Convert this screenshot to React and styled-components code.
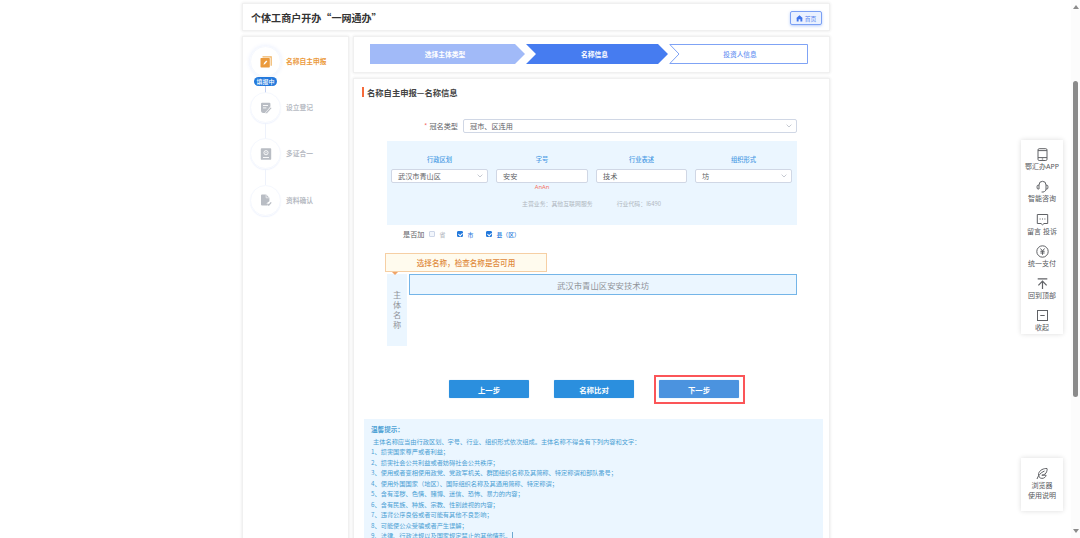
import React, { useState } from "react";
import styled, { createGlobalStyle } from "styled-components";

const sideSteps = [
  { id: 1, name: "名称自主申报", icon: "edit", status: "填报中" },
  { id: 2, name: "设立登记", icon: "note" },
  { id: 3, name: "多证合一", icon: "cert" },
  { id: 4, name: "资料确认", icon: "file" },
];

const tips = [
  "损害国家尊严或者利益；",
  "损害社会公共利益或者妨碍社会公共秩序；",
  "使用或者变相使用政党、党政军机关、群团组织名称及其简称、特定称谓和部队番号；",
  "使用外国国家（地区）、国际组织名称及其通用简称、特定称谓；",
  "含有淫秽、色情、赌博、迷信、恐怖、暴力的内容；",
  "含有民族、种族、宗教、性别歧视的内容；",
  "违背公序良俗或者可能有其他不良影响；",
  "可能使公众受骗或者产生误解；",
  "法律、行政法规以及国家规定禁止的其他情形。",
];

const tools = [
  { name: "鄂汇办APP", icon: "phone" },
  { name: "智能咨询", icon: "headset" },
  { name: "留言 投诉", icon: "message" },
  { name: "统一支付", icon: "yen" },
  { name: "回到顶部", icon: "top" },
  { name: "收起", icon: "minus" },
];

const SideIcon = ({ type }) => {
  if (type === "edit") {
    return (
      <svg width="12" height="12" viewBox="0 0 12 12">
        <path d="M2.5 .9h8.7v8.9" fill="none" stroke="#f0b465" strokeWidth="1.2" />
        <rect x=".5" y="2" width="9.3" height="9.5" rx=".8" fill="#eb9a3c" />
        <path d="M3.6 8.7l.4-1.6 2.3-2.6 1 .9L5 8z" fill="#fff" />
      </svg>
    );
  }
  if (type === "note") {
    return (
      <svg width="12" height="12" viewBox="0 0 12 12">
        <path d="M2 .8h7.4a1 1 0 0 1 1 1v2.800L5.200 10.900H3.200C1.800 10.900 1 10 1 8.800V1.800a1 1 0 0 1 1-1z" fill="#b9bdc4" />
        <path d="M3 3.500h5M3 5.900h3.400" stroke="#fff" strokeWidth=".9" />
        <path d="M10.600 5.200l1.100 1-4.500 5.100-1.800.4.5-1.700z" fill="#b9bdc4" stroke="#fff" strokeWidth=".5" />
      </svg>
    );
  }
  if (type === "cert") {
    return (
      <svg width="12" height="12" viewBox="0 0 12 12">
        <rect x=".8" y=".2" width="10.400" height="11.600" rx=".9" fill="#b9bdc4" />
        <circle cx="6" cy="4.700" r="2.100" fill="none" stroke="#fff" strokeWidth=".9" />
        <circle cx="6" cy="4.700" r=".6" fill="#fff" />
        <path d="M3 9.500h6" stroke="#fff" strokeWidth=".9" />
      </svg>
    );
  }
  return (
    <svg width="12" height="12" viewBox="0 0 12 12">
      <path d="M2 .5h4.200l3.200 3.200v3.600L6.600 9.200l1.200 2.200H2a1 1 0 0 1-1-1V1.500a1 1 0 0 1 1-1z" fill="#b9bdc4" />
      <path d="M6.100 .5v3.300h3.200" fill="none" stroke="#fff" strokeWidth=".6" />
      <path d="M7.400 9.700l1.400 1.400 2.400-2.700" fill="none" stroke="#b9bdc4" strokeWidth="1.300" />
    </svg>
  );
};

const ToolIcon = ({ type }) => (
  <ToolSvg viewBox="0 0 13 13">
    {type === "phone" && (
      <>
        <rect x="2" y=".7" width="9" height="11.800" rx="1.200" />
        <path d="M2 9.600h9M2 2.600h9M5.800 11h1.400" />
      </>
    )}
    {type === "headset" && (
      <>
        <path d="M3 9V5a3.500 3.700 0 0 1 7 0v4M3 5.200H2.200A1.100 1.100 0 0 0 1.100 6.300v1.600A1.100 1.100 0 0 0 2.200 9H3M10 5.200h.8a1.100 1.100 0 0 1 1.100 1.100v1.600A1.100 1.100 0 0 1 10.800 9H10" />
        <path d="M10 9c0 1.600-1 2.600-2.600 2.800M5.600 12h2" />
      </>
    )}
    {type === "message" && (
      <>
        <path d="M1.300 1.500h10.400v9H8l-1.500 1.300L5 10.500H1.300z" />
        <path d="M3.600 6h1M6 6h1M8.400 6h1" />
      </>
    )}
    {type === "yen" && (
      <>
        <circle cx="6.500" cy="6.500" r="5.700" />
        <path d="M4.500 3.500l2 2.600 2-2.600M6.500 6.100v3.700M4.400 6.300h4.200M4.400 8h4.200" />
      </>
    )}
    {type === "top" && (
      <path d="M1.700 1.800h9.600M6.500 12V4.400M2.400 8.300l4.100-4.200 4.100 4.200" strokeWidth="1.200" />
    )}
    {type === "minus" && (
      <>
        <rect x="1.500" y="1.500" width="10" height="10" />
        <path d="M4.300 6.500h4.400" />
      </>
    )}
    {type === "browser" && (
      <>
        <path d="M11 1.500C8 1.200 3.500 3 2.600 6.600c-.6 2.700 1 4.700 3.300 4.800 2.400 0 4-1.600 4.200-3.200H5.800c2.500-.4 4.300-1.500 4.800-3.400.4-1.300.8-2.300.4-3.300z" />
        <path d="M1 12c1-3 3.500-6.500 7.500-8" />
      </>
    )}
  </ToolSvg>
);

const Arrow = () => (
  <svg width="6" height="4" viewBox="0 0 6 4">
    <path d="M.6 .6L3 3 5.400 .6" fill="none" stroke="#b8bdc7" strokeWidth=".8" />
  </svg>
);

const App = () => {
  const [checked, setChecked] = useState({ city: true, county: true });

  const toggle = (key) => {
    setChecked((current) => ({ ...current, [key]: !current[key] }));
  };

  return (
    <Wrap>
      <GlobalStyle />
      <Container>
        <Header>
          <HeaderTitle>个体工商户开办“一网通办”</HeaderTitle>
          <HomeBtn>
            <svg width="7" height="7" viewBox="0 0 7 7">
              <path d="M3.500 .2L6.900 3.300H6.300V6.600H4.400V4.300H2.600v2.300H.700V3.300H.1z" fill="#3f74ec" />
            </svg>
            首页
          </HomeBtn>
        </Header>
        <Body>
          <Sidebar>
            {sideSteps.map((v) => (
              <SideItem key={v.id}>
                <Circle $active={!!v.status}>
                  <SideIcon type={v.icon} />
                  {v.status && <Status>{v.status}</Status>}
                </Circle>
                <SideName $active={!!v.status}>{v.name}</SideName>
              </SideItem>
            ))}
          </Sidebar>
          <Main>
            <StepBox>
              <Step $width="155px" $color="#a1baf8" $first>
                选择主体类型
              </Step>
              <Step $width="142px" $color="#467cf0">
                名称信息
              </Step>
              <LastStep>
                <StepOutline viewBox="0 0 139 20">
                  <path d="M.8 .5H138.500V19.500H.8L10 10z" fill="none" stroke="#7fa3f5" />
                </StepOutline>
                投资人信息
              </LastStep>
            </StepBox>
            <Panel>
              <PanelTitle>名称自主申报—名称信息</PanelTitle>
              <TypeRow>
                <TypeLabel>
                  <Required>*</Required>冠名类型
                </TypeLabel>
                <Field $width="334px">
                  冠市、区连用
                  <Arrow />
                </Field>
              </TypeRow>
              <NameBox>
                <Column $width="97px">
                  <ColumnTitle>行政区划</ColumnTitle>
                  <Field>
                    武汉市青山区
                    <Arrow />
                  </Field>
                </Column>
                <Column $width="92px">
                  <ColumnTitle>字号</ColumnTitle>
                  <Field>安安</Field>
                  <Pinyin>AnAn</Pinyin>
                </Column>
                <Column $width="91px">
                  <ColumnTitle>行业表述</ColumnTitle>
                  <Field>技术</Field>
                </Column>
                <Column $width="97px">
                  <ColumnTitle>组织形式</ColumnTitle>
                  <Field>
                    坊
                    <Arrow />
                  </Field>
                </Column>
                <Business>
                  <span>主营业务：其他互联网服务</span>
                  <span>行业代码：I6490</span>
                </Business>
              </NameBox>
              <CheckRow>
                是否加
                <Check $width="28px" $disabled>
                  <Box />省
                </Check>
                <Check $width="29px" onClick={() => toggle("city")}>
                  <Box $on={checked.city} />市
                </Check>
                <Check $width="40px" onClick={() => toggle("county")}>
                  <Box $on={checked.county} />县（区）
                </Check>
              </CheckRow>
              <Notice>选择名称，检查名称是否可用</Notice>
              <ResultBox>
                <ResultLabel>
                  <span>主</span>
                  <span>体</span>
                  <span>名</span>
                  <span>称</span>
                </ResultLabel>
                <Result>武汉市青山区安安技术坊</Result>
              </ResultBox>
              <BtnBox>
                <Btn>上一步</Btn>
                <Btn>名称比对</Btn>
                <NextFrame>
                  <Btn $light>下一步</Btn>
                </NextFrame>
              </BtnBox>
              <TipBox>
                <TipTitle>温馨提示：</TipTitle>
                <TipIntro>
                  主体名称应当由行政区划、字号、行业、组织形式依次组成。主体名称不得含有下列内容和文字：
                </TipIntro>
                {tips.map((v, i) => (
                  <Tip key={v}>
                    {i + 1}、{v}
                    {i === tips.length - 1 && <Caret />}
                  </Tip>
                ))}
              </TipBox>
            </Panel>
          </Main>
        </Body>
      </Container>
      <ToolBar>
        <ToolCard>
          {tools.map((v) => (
            <Tool key={v.name}>
              <ToolIcon type={v.icon} />
              <ToolName>{v.name}</ToolName>
            </Tool>
          ))}
        </ToolCard>
        <HelpCard>
          <ToolIcon type="browser" />
          <ToolName>浏览器</ToolName>
          <ToolName>使用说明</ToolName>
        </HelpCard>
      </ToolBar>
      <ScrollBar>
        <ScrollArrow $up />
        <ScrollThumb />
        <ScrollArrow />
      </ScrollBar>
    </Wrap>
  );
};

const GlobalStyle = createGlobalStyle`
  * {
    box-sizing: border-box;
  }
  body {
    margin: 0;
    background-color: #fff;
    font-family: "Noto Sans CJK SC", "Noto Sans", sans-serif;
    overflow: hidden;
  }
  svg {
    display: block;
    flex: none;
  }
`;

const Wrap = styled.div`
  width: 1080px;
  height: 538px;
  overflow: hidden;
  display: flex;
  padding-left: 242px;
  white-space: nowrap;
`;
const Container = styled.div`
  width: 588px;
  padding-top: 3px;
  flex: none;
`;
const Card = styled.div`
  background-color: #fff;
  border: 1px solid #f0f0f0;
  box-shadow: 0 0 3px rgba(0, 0, 0, 0.11);
`;

// Header
const Header = styled(Card)`
  height: 28px;
  padding: 0 7px 0 8px;
  display: flex;
  justify-content: space-between;
  align-items: center;
`;
const HeaderTitle = styled.div`
  font-size: 10.05px;
  font-weight: 700;
  color: #333;
`;
const HomeBtn = styled.button`
  width: 32px;
  height: 14px;
  margin-top: 2px;
  padding: 0;
  display: flex;
  justify-content: center;
  align-items: center;
  gap: 2px;
  font-family: inherit;
  font-size: 5.8px;
  color: #5b87ee;
  background-color: #eaf1ff;
  border: 1px solid #7ba0f4;
  border-radius: 2px;
  box-shadow: 0 1px 3px rgba(70, 124, 240, 0.4);
`;
const Body = styled.div`
  display: flex;
  justify-content: space-between;
  margin-top: 5px;
`;

// Sidebar
const Sidebar = styled(Card)`
  width: 107px;
  height: 510px;
  padding: 9px 0 0 7px;
`;
const SideItem = styled.div`
  height: 46.2px;
  display: flex;
  align-items: flex-start;
  gap: 5px;
`;
const Circle = styled.div`
  position: relative;
  width: 31px;
  height: 31px;
  display: flex;
  justify-content: center;
  align-items: center;
  border-radius: 50%;
  border: 1px solid #f5f8fe;
  box-shadow: ${(props) =>
    props.$active ? "0 0 4px rgba(90, 130, 240, 0.16)" : "0 1px 1px rgba(90, 130, 240, 0.1)"};

  ${SideItem}:not(:last-child) &::after {
    content: "";
    position: absolute;
    left: 14px;
    top: 30px;
    width: 1px;
    height: 16px;
    background-color: ${(props) => (props.$active ? "#c3cff0" : "#eef2fb")};
  }
`;
const Status = styled.div`
  position: absolute;
  z-index: 1;
  left: 3px;
  top: 29.5px;
  width: 23px;
  height: 9px;
  line-height: 9px;
  border-radius: 5px;
  text-align: center;
  font-size: 6px;
  font-weight: 500;
  color: #fff;
  background-color: #2379dc;
`;
const SideName = styled.div`
  line-height: 31px;
  font-size: 6.75px;
  font-weight: 700;
  color: ${(props) => (props.$active ? "#eb9a3c" : "#b7bbc3")};
`;

// Step
const Main = styled.div`
  width: 477px;
`;
const StepBox = styled(Card)`
  height: 37px;
  padding: 7px 0 0 16px;
  display: flex;
  gap: 1px;
`;
const Step = styled.div`
  width: ${(props) => props.$width};
  height: 20px;
  line-height: 21px;
  padding-right: 5px;
  text-align: center;
  font-size: 6.75px;
  font-weight: 700;
  color: #fff;
  background-color: ${(props) => props.$color};
  clip-path: ${(props) =>
    props.$first
      ? "polygon(0 0, calc(100% - 10px) 0, 100% 50%, calc(100% - 10px) 100%, 0 100%)"
      : "polygon(0 0, calc(100% - 10px) 0, 100% 50%, calc(100% - 10px) 100%, 0 100%, 10px 50%)"};
`;
const LastStep = styled.div`
  position: relative;
  width: 139px;
  height: 20px;
  line-height: 21px;
  padding-left: 3px;
  text-align: center;
  font-size: 6.7px;
  font-weight: 500;
  color: #6a93f2;
`;
const StepOutline = styled.svg`
  position: absolute;
  left: 0;
  top: 0;
  width: 139px;
  height: 20px;
`;

// Panel
const Panel = styled(Card)`
  height: 468px;
  margin-top: 5px;
  padding: 8px 6px 0 8px;
`;
const PanelTitle = styled.div`
  height: 10px;
  line-height: 10px;
  padding-left: 3px;
  border-left: 2px solid #f66a3a;
  font-size: 8.32px;
  font-weight: 700;
  color: #444;
`;
const TypeRow = styled.div`
  margin: 22px 26px 0 0;
  display: flex;
  justify-content: flex-end;
  align-items: center;
`;
const TypeLabel = styled.div`
  margin-right: 5px;
  font-size: 7.15px;
  line-height: 14px;
  color: #606266;
`;
const Required = styled.span`
  margin-right: 2px;
  color: #f56c6c;
`;
const Field = styled.div`
  width: ${(props) => props.$width || "100%"};
  height: 14px;
  padding: 0 4px 0 6px;
  display: flex;
  justify-content: space-between;
  align-items: center;
  font-size: 7.15px;
  line-height: 12px;
  color: #606266;
  background-color: #fff;
  border: 1px solid #d0d7e5;
  border-radius: 2px;
`;
const NameBox = styled.div`
  width: 410px;
  height: 84px;
  margin: 8px 0 0 25px;
  padding: 13px 5px 0 4px;
  display: flex;
  flex-wrap: wrap;
  justify-content: space-between;
  align-content: flex-start;
  background-color: #ebf6ff;
`;
const Column = styled.div`
  width: ${(props) => props.$width};
  height: 45px;
`;
const ColumnTitle = styled.div`
  height: 15px;
  line-height: 11px;
  text-align: center;
  font-size: 6.3px;
  font-weight: 500;
  color: #4a9be4;
`;
const Pinyin = styled.div`
  line-height: 9px;
  text-align: center;
  font-family: "Noto Sans", sans-serif;
  font-size: 5.8px;
  color: #f5705c;
`;
const Business = styled.div`
  width: 100%;
  padding-left: 131px;
  display: flex;
  gap: 24px;
  font-size: 5.9px;
  line-height: 10px;
  color: #b0b6c0;
`;
const CheckRow = styled.div`
  height: 12px;
  margin: 3px 0 0 41px;
  display: flex;
  align-items: center;
  font-size: 7.15px;
  color: #606266;
`;
const Check = styled.label`
  width: ${(props) => props.$width};
  margin-left: ${(props) => (props.$disabled ? "5px" : "0")};
  display: flex;
  align-items: center;
  gap: 4px;
  font-size: 5.9px;
  font-weight: 500;
  color: ${(props) => (props.$disabled ? "#b8bcc4" : "#2f80dc")};
`;
const Box = styled.span`
  width: 6px;
  height: 6px;
  flex: none;
  display: flex;
  justify-content: center;
  border: 1px solid ${(props) => (props.$on ? "#2379dc" : "#cdd6e8")};
  border-radius: 1px;
  background-color: ${(props) => (props.$on ? "#2379dc" : "#f2f6fc")};

  &::after {
    content: "";
    display: ${(props) => (props.$on ? "block" : "none")};
    width: 2px;
    height: 3px;
    border: solid #fff;
    border-width: 0 0.8px 0.8px 0;
    transform: rotate(45deg);
  }
`;

// Result
const Notice = styled.div`
  position: relative;
  width: 162px;
  height: 19px;
  margin: 13px 0 0 23px;
  line-height: 18px;
  text-align: center;
  font-size: 7.58px;
  font-weight: 500;
  color: #e08a3c;
  background-color: #fffbee;
  border: 1px solid #f6cfa4;

  &::after {
    content: "";
    position: absolute;
    left: 6px;
    top: 18px;
    border: 3px solid transparent;
    border-top-color: #f0a468;
    border-bottom: 0;
  }
`;
const ResultBox = styled.div`
  width: 410px;
  margin: 2px 0 0 25px;
  display: flex;
  align-items: flex-start;
  justify-content: space-between;
`;
const ResultLabel = styled.div`
  width: 20px;
  height: 72px;
  padding-bottom: 2px;
  display: flex;
  flex-direction: column;
  align-items: center;
  justify-content: center;
  font-size: 8.2px;
  line-height: 10.2px;
  color: #909399;
  background-color: #ebf6ff;
`;
const Result = styled.div`
  width: 388px;
  height: 21px;
  line-height: 20px;
  text-align: center;
  font-size: 8.4px;
  color: #909399;
  background-color: #ebf6ff;
  border: 1px solid #74b5e8;
`;

// Button
const BtnBox = styled.div`
  height: 29px;
  margin: 29px 0 0 87px;
  display: flex;
  align-items: center;
  gap: 25px;
`;
const Btn = styled.button`
  width: 80px;
  height: 18px;
  margin-bottom: 1px;
  padding: 0;
  font-family: inherit;
  font-size: 7.4px;
  font-weight: 700;
  color: #fff;
  background-color: ${(props) => (props.$light ? "#4b93df" : "#2b8fde")};
  border: 0;
  border-radius: 1px;
  box-shadow: 0 0 1px rgba(43, 143, 222, 0.5);
`;
const NextFrame = styled.div`
  width: 91px;
  height: 29px;
  margin-left: -5px;
  padding-left: 3px;
  display: flex;
  align-items: center;
  border: 2px solid #fb5558;
`;

// Tip
const TipBox = styled.div`
  width: 459px;
  height: 130px;
  margin: 15px 0 0 2px;
  padding: 5px 7px 0;
  background-color: #ebf6ff;
  color: #4aa0d4;
`;
const TipTitle = styled.div`
  line-height: 10px;
  font-size: 6.6px;
  font-weight: 700;
`;
const TipIntro = styled.div`
  margin-top: 2px;
  padding-left: 2px;
  line-height: 11px;
  font-size: 6.22px;
`;
const Tip = styled.div`
  display: flex;
  align-items: center;
  height: 10.5px;
  line-height: 10px;
  font-size: 6.22px;
`;
const Caret = styled.span`
  width: 1px;
  height: 8px;
  margin-left: 1px;
  background-color: #6fa9d0;
`;

// ToolBar
const ToolBar = styled.div`
  width: 42px;
  margin-left: 191px;
  padding-top: 140px;
  flex: none;
`;
const ToolCard = styled.div`
  height: 194px;
  padding-top: 8px;
  background-color: #fff;
  box-shadow: 0 0 5px rgba(0, 0, 0, 0.14);
`;
const Tool = styled.div`
  height: 32.3px;
  display: flex;
  flex-direction: column;
  align-items: center;
`;
const ToolSvg = styled.svg`
  width: 13px;
  height: 13px;
  fill: none;
  stroke: #606266;
  stroke-width: 1;
`;
const ToolName = styled.div`
  font-family: "Noto Sans", "Noto Sans CJK SC", sans-serif;
  font-size: 7px;
  line-height: 10px;
  color: #55585c;

  ${Tool} & {
    line-height: 11.5px;
  }
`;
const HelpCard = styled(ToolCard)`
  height: 53px;
  margin-top: 124px;
  padding-top: 9px;
  display: flex;
  flex-direction: column;
  align-items: center;

  ${ToolSvg} {
    margin-bottom: 1px;
  }
`;

// ScrollBar
const ScrollBar = styled.div`
  width: 9px;
  height: 538px;
  margin-left: auto;
  display: flex;
  flex-direction: column;
  align-items: center;
  justify-content: space-between;
  padding: 5px 0;
  background-color: #fcfcfc;
`;
const ScrollThumb = styled.div`
  width: 5px;
  height: 316px;
  margin-bottom: 60px;
  border-radius: 3px;
  background-color: #8b8b8b;
`;
const ScrollArrow = styled.div`
  border: 3px solid transparent;
  border-top: ${(props) => (props.$up ? "0" : "4px solid #8b8b8b")};
  border-bottom: ${(props) => (props.$up ? "4px solid #8b8b8b" : "0")};
`;

export default App;
